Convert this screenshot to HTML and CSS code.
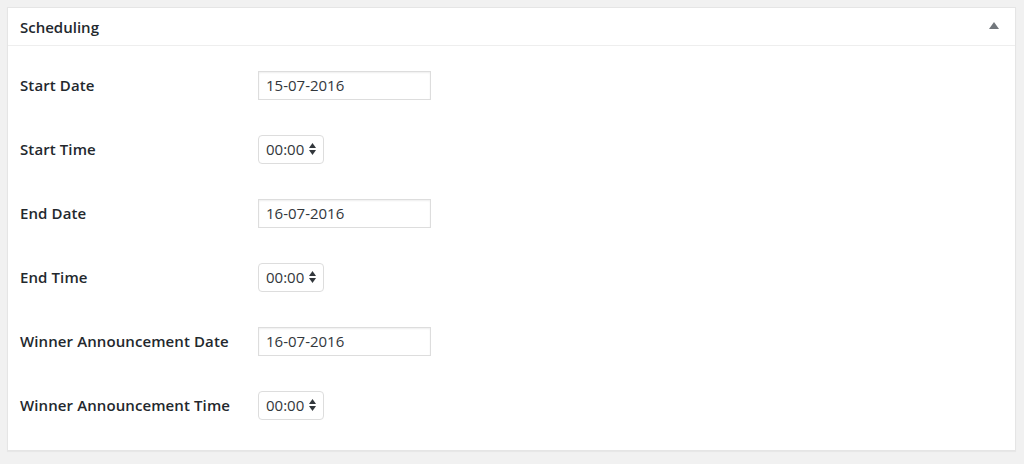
FILE: index.html
```html
<!DOCTYPE html>
<html lang="en">
<head>
    <meta charset="UTF-8">
    <meta name="viewport" content="width=device-width, initial-scale=1.0">
    <title>Scheduling</title>
    <link rel="stylesheet" href="styles.css">
</head>
<body>
    <div class="postbox">
        <div class="postbox-header">
            <h2>Scheduling</h2>
            <svg class="toggle" width="10" height="7" viewBox="0 0 10 7"><polygon points="5,0 10,7 0,7" fill="#72777c"/></svg>
        </div>
        <div class="inside">
            <div class="field">
                <label>Start Date</label>
                <input class="date" type="text" value="15-07-2016">
            </div>
            <div class="field">
                <label>Start Time</label>
                <div class="select"><span>00:00</span><svg width="7" height="12" viewBox="0 0 7 12"><polygon points="3.5,0 7,5 0,5" fill="#32373c"/><polygon points="0,7 7,7 3.5,12" fill="#32373c"/></svg></div>
            </div>
            <div class="field">
                <label>End Date</label>
                <input class="date" type="text" value="16-07-2016">
            </div>
            <div class="field">
                <label>End Time</label>
                <div class="select"><span>00:00</span><svg width="7" height="12" viewBox="0 0 7 12"><polygon points="3.5,0 7,5 0,5" fill="#32373c"/><polygon points="0,7 7,7 3.5,12" fill="#32373c"/></svg></div>
            </div>
            <div class="field">
                <label>Winner Announcement Date</label>
                <input class="date" type="text" value="16-07-2016">
            </div>
            <div class="field">
                <label>Winner Announcement Time</label>
                <div class="select"><span>00:00</span><svg width="7" height="12" viewBox="0 0 7 12"><polygon points="3.5,0 7,5 0,5" fill="#32373c"/><polygon points="0,7 7,7 3.5,12" fill="#32373c"/></svg></div>
            </div>
        </div>
    </div>
</body>
</html>
```

FILE: styles.css
```css
body {
    margin: 0;
    padding: 7px 8px 13px 7px;
    background: #f1f1f1;
    font-family: "Open Sans", "Noto Sans", sans-serif;
    font-size: 15px;
    color: #23282d;
}
.postbox {
    background: #fff;
    border: 1px solid #e5e5e5;
    box-shadow: 0 1px 1px rgba(0, 0, 0, 0.04);
}
.postbox-header {
    display: flex;
    align-items: center;
    justify-content: space-between;
    height: 37px;
    padding: 0 16px 0 12px;
    border-bottom: 1px solid #eee;
}
.postbox-header h2 {
    margin: 0;
    font-size: 15px;
    font-weight: 600;
}
.toggle {
    margin-top: -3px;
}
.inside {
    padding: 7px 12px 13px;
}
.field {
    display: grid;
    grid-template-columns: 238px auto;
    align-items: center;
    justify-items: start;
    height: 64px;
}
.field label {
    font-weight: 600;
    letter-spacing: 0.1px;
}
.date {
    box-sizing: border-box;
    width: 173px;
    height: 29px;
    margin: 0;
    padding: 0 7px;
    border: 1px solid #ddd;
    box-shadow: inset 0 1px 2px rgba(0, 0, 0, 0.07);
    font-family: inherit;
    font-size: 15px;
    color: #32373c;
    outline: none;
}
.select {
    box-sizing: border-box;
    display: flex;
    align-items: center;
    gap: 5px;
    width: 66px;
    height: 29px;
    padding: 0 0 0 7px;
    border: 1px solid #ddd;
    border-radius: 4px;
    color: #32373c;
}
```
